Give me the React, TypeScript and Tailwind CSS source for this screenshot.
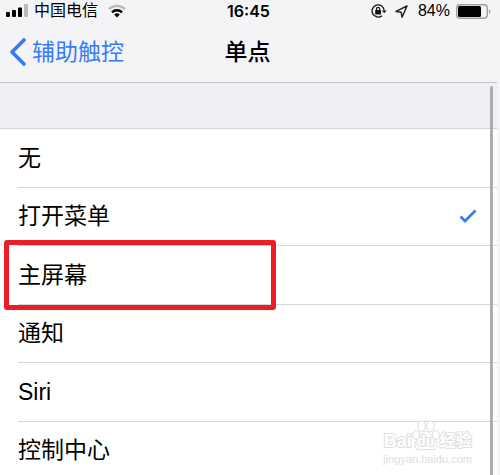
import { useState } from "react";
import clsx from "clsx";

const OPTIONS = [
  { id: "none", label: "无" },
  { id: "menu", label: "打开菜单" },
  { id: "home", label: "主屏幕", highlighted: true },
  { id: "notifications", label: "通知" },
  { id: "siri", label: "Siri" },
  { id: "control-center", label: "控制中心" },
];

function SignalIcon() {
  return (
    <svg width="22" height="14" viewBox="0 0 22 14" aria-hidden="true">
      <rect x="0" y="8" width="4" height="5" rx="1" />
      <rect x="6" y="6" width="4" height="7" rx="1" />
      <rect x="12" y="3.5" width="4" height="9.5" rx="1" />
      <rect x="18" y="0" width="4" height="13" rx="1" fill="#b9b9bb" />
    </svg>
  );
}

function WifiIcon() {
  return (
    <svg width="18" height="14" viewBox="0 0 18 14" fill="none" aria-hidden="true">
      <path d="M1 5.2a11.3 11.3 0 0 1 16 0" stroke="#b9b9bb" strokeWidth="2.4" />
      <path d="M4 8.3a7 7 0 0 1 10 0" stroke="#000" strokeWidth="2.4" />
      <path d="M9 13.4 6.2 10.6a4 4 0 0 1 5.6 0Z" fill="#000" />
    </svg>
  );
}

function RotationLockIcon() {
  return (
    <svg width="16" height="14" viewBox="0 0 16 14" fill="none" stroke="#111" aria-hidden="true">
      <path d="M13.2 6.2A6.1 6.1 0 1 0 11 11.7" strokeWidth="1.3" />
      <path d="M10.8 6.4h4.8L13.2 9.3Z" fill="#111" stroke="none" />
      <rect x="4.2" y="6" width="5.8" height="4.4" rx="0.5" fill="#111" stroke="none" />
      <path d="M5.5 6.4V5a1.6 1.6 0 0 1 3.2 0v1.4" strokeWidth="1.2" />
    </svg>
  );
}

function LocationIcon() {
  return (
    <svg width="13" height="13" viewBox="0 0 13 13" fill="none" aria-hidden="true">
      <path d="M12 1 1 6.4l5.2.9.9 4.9Z" stroke="#222" strokeWidth="1.5" strokeLinejoin="round" />
    </svg>
  );
}

function BatteryIcon() {
  return (
    <svg width="35" height="15" viewBox="0 0 35 15" fill="none" aria-hidden="true">
      <rect x="0.7" y="0.7" width="30.6" height="13.6" rx="3.4" stroke="#a0a0a2" strokeWidth="1.4" />
      <rect x="2" y="2" width="23" height="11" rx="1.5" fill="#000" />
      <path d="M33 5.2c1.9.8 1.9 3.8 0 4.6Z" fill="#a0a0a2" />
    </svg>
  );
}

function StatusBar() {
  return (
    <div className="grid h-[22px] grid-cols-[1fr_auto_1fr] items-center px-1.5 text-base leading-5">
      <div className="flex items-center gap-1.5">
        <SignalIcon />
        <span>中国电信</span>
        <span className="pl-1">
          <WifiIcon />
        </span>
      </div>
      <span className="font-[Inter] font-semibold">16:45</span>
      <div className="flex items-center justify-end gap-1.5">
        <span className="flex items-center gap-2 pr-1">
          <RotationLockIcon />
          <LocationIcon />
        </span>
        <span>84%</span>
        <BatteryIcon />
      </div>
    </div>
  );
}

function NavBar() {
  return (
    <header className="grid h-[61px] grid-cols-[1fr_auto_1fr] items-center border-b border-[#c4c4c8] pr-3 pl-2.5 text-[23px] leading-8">
      <button type="button" className="flex items-center gap-1.5 text-[#357cf6]">
        <svg width="16" height="28" viewBox="0 0 16 28" fill="none" aria-hidden="true">
          <path d="M14 2 2 14l12 12" stroke="currentColor" strokeWidth="3.6" strokeLinecap="round" strokeLinejoin="round" />
        </svg>
        辅助触控
      </button>
      <h1 className="font-medium">单点</h1>
    </header>
  );
}

function Watermark() {
  return (
    <div className="pointer-events-none absolute right-7 bottom-2.5 flex flex-col items-center gap-0.5">
      <div className="flex items-end font-bold text-white [-webkit-text-stroke:2px_#e0e0e0] [paint-order:stroke_fill]">
        <span className="text-lg leading-5">Bai</span>
        <span className="relative">
          <svg width="28" height="32" viewBox="0 0 28 32" fill="#fff" stroke="#dcdcdc" className="[paint-order:normal]" aria-hidden="true">
            <ellipse cx="4.2" cy="16" rx="3.4" ry="4.4" />
            <ellipse cx="9.6" cy="7" rx="3.8" ry="5.4" />
            <ellipse cx="18.4" cy="7" rx="3.8" ry="5.4" />
            <ellipse cx="23.8" cy="16" rx="3.4" ry="4.4" />
            <path d="M14 12.5c-4 0-5 4-8 7-5 4.5-4 11 1 11.3 3 .2 4-.5 7-.5s4 .7 7 .5c5-.3 6-6.8 1-11.3-3-3-4-7-8-7Z" />
          </svg>
          <span className="absolute inset-x-0 bottom-0.5 text-center text-sm leading-4">du</span>
        </span>
        <span className="text-base leading-5">经验</span>
      </div>
      <span className="text-[11px] leading-3 text-[#dedede]">jingyan.baidu.com</span>
    </div>
  );
}

export default function App() {
  const [selected, setSelected] = useState("menu");

  return (
    <div className="relative h-screen overflow-hidden bg-[#f4f4f6] pr-[3px] font-['Liberation_Sans','Noto_Sans_CJK_SC',sans-serif] text-black">
      <StatusBar />
      <NavBar />
      <div className="h-[46px] border-b border-[#d3d3d7] bg-[#efeff4]" />

      <div role="radiogroup" aria-label="单点" className="grid min-h-[351px] auto-rows-fr bg-white pl-[18px]">
        {OPTIONS.map((option) => (
          <label
            key={option.id}
            className="relative flex cursor-pointer items-center justify-between border-b border-[#d6d6d9] pr-5 text-[23px] leading-8"
          >
            <input
              type="radio"
              name="single-tap"
              className="sr-only"
              checked={selected === option.id}
              onChange={() => setSelected(option.id)}
            />
            <span>{option.label}</span>
            <svg
              width="18"
              height="14"
              viewBox="0 0 18 14"
              fill="none"
              aria-hidden="true"
              className={clsx(selected !== option.id && "invisible")}
            >
              <path d="m1.5 7.5 4.5 4.5L16.5 1.5" stroke="#357cf6" strokeWidth="2.8" />
            </svg>
            {option.highlighted && (
              <span className="absolute -inset-y-1.5 -left-3.5 z-10 w-[272px] rounded-[3px] border-5 border-[#ee1c25]" />
            )}
          </label>
        ))}
      </div>

      {/* Scroll indicator */}
      <div className="absolute top-[86px] right-[7px] bottom-0 w-[3px] rounded-t-full bg-[#adadaf]" />
      <Watermark />
    </div>
  );
}
